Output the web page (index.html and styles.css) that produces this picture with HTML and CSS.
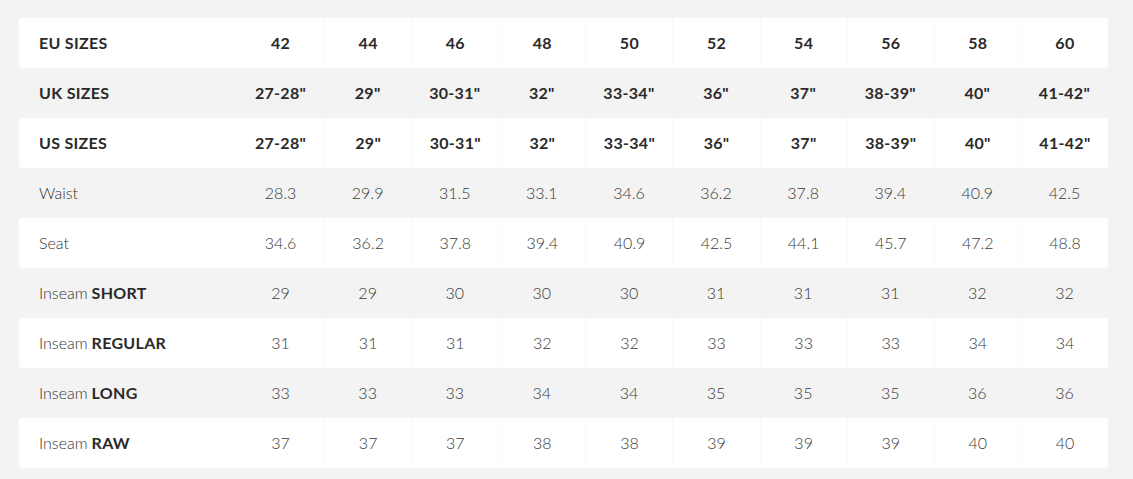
FILE: index.html
```html
<!DOCTYPE html>
<html>
<head>
<meta charset="utf-8">
<link rel="stylesheet" href="styles.css">
</head>
<body>
<div class="chart">
  <div class="row white head">
    <div class="label">EU SIZES</div><div class="cell">42</div><div class="cell">44</div><div class="cell">46</div><div class="cell">48</div><div class="cell">50</div><div class="cell">52</div><div class="cell">54</div><div class="cell">56</div><div class="cell">58</div><div class="cell">60</div>
  </div>
  <div class="row head">
    <div class="label">UK SIZES</div><div class="cell">27-28"</div><div class="cell">29"</div><div class="cell">30-31"</div><div class="cell">32"</div><div class="cell">33-34"</div><div class="cell">36"</div><div class="cell">37"</div><div class="cell">38-39"</div><div class="cell">40"</div><div class="cell">41-42"</div>
  </div>
  <div class="row white head">
    <div class="label">US SIZES</div><div class="cell">27-28"</div><div class="cell">29"</div><div class="cell">30-31"</div><div class="cell">32"</div><div class="cell">33-34"</div><div class="cell">36"</div><div class="cell">37"</div><div class="cell">38-39"</div><div class="cell">40"</div><div class="cell">41-42"</div>
  </div>
  <div class="row">
    <div class="label">Waist</div><div class="cell">28.3</div><div class="cell">29.9</div><div class="cell">31.5</div><div class="cell">33.1</div><div class="cell">34.6</div><div class="cell">36.2</div><div class="cell">37.8</div><div class="cell">39.4</div><div class="cell">40.9</div><div class="cell">42.5</div>
  </div>
  <div class="row white">
    <div class="label">Seat</div><div class="cell">34.6</div><div class="cell">36.2</div><div class="cell">37.8</div><div class="cell">39.4</div><div class="cell">40.9</div><div class="cell">42.5</div><div class="cell">44.1</div><div class="cell">45.7</div><div class="cell">47.2</div><div class="cell">48.8</div>
  </div>
  <div class="row">
    <div class="label">Inseam <b>SHORT</b></div><div class="cell">29</div><div class="cell">29</div><div class="cell">30</div><div class="cell">30</div><div class="cell">30</div><div class="cell">31</div><div class="cell">31</div><div class="cell">31</div><div class="cell">32</div><div class="cell">32</div>
  </div>
  <div class="row white">
    <div class="label">Inseam <b>REGULAR</b></div><div class="cell">31</div><div class="cell">31</div><div class="cell">31</div><div class="cell">32</div><div class="cell">32</div><div class="cell">33</div><div class="cell">33</div><div class="cell">33</div><div class="cell">34</div><div class="cell">34</div>
  </div>
  <div class="row">
    <div class="label">Inseam <b>LONG</b></div><div class="cell">33</div><div class="cell">33</div><div class="cell">33</div><div class="cell">34</div><div class="cell">34</div><div class="cell">35</div><div class="cell">35</div><div class="cell">35</div><div class="cell">36</div><div class="cell">36</div>
  </div>
  <div class="row white">
    <div class="label">Inseam <b>RAW</b></div><div class="cell">37</div><div class="cell">37</div><div class="cell">37</div><div class="cell">38</div><div class="cell">38</div><div class="cell">39</div><div class="cell">39</div><div class="cell">39</div><div class="cell">40</div><div class="cell">40</div>
  </div>
</div>
</body>
</html>
```

FILE: styles.css
```css
html, body {
  margin: 0;
  padding: 0;
  background: #f3f3f3;
}
body {
  font-family: "Lato", "Liberation Sans", sans-serif;
  color: #333;
  height: 479px;
}
.chart {
  width: 1089px;
  margin: 18px 0 0 19px;
}
.row {
  display: grid;
  grid-template-columns: 218px repeat(10, 1fr);
  height: 50px;
  border-radius: 4px;
  font-size: 16px;
  font-weight: 300;
  color: #3a3a3a;
  line-height: 20px;
}
.row.white {
  background: #fff;
}
.label {
  display: flex;
  align-items: center;
  padding-left: 20px;
  padding-bottom: 1px;
  color: #333;
}
.label b {
  font-weight: 700;
  margin-left: 4px;
  color: #2a2a2a;
  letter-spacing: 0.3px;
}
.cell {
  display: flex;
  align-items: center;
  justify-content: center;
  padding-bottom: 1px;
}
.row.white .cell + .cell {
  border-left: 1px solid #f9f9f9;
}
.head {
  font-weight: 700;
  color: #2a2a2a;
  letter-spacing: 0.3px;
}
.head .label {
  color: #2a2a2a;
}
```
